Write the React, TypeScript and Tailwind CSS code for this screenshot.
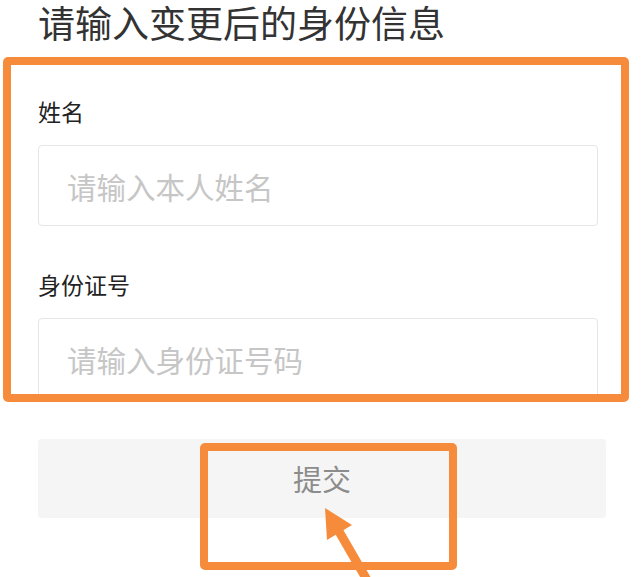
import { useState } from 'react'

const cjk = "font-['Noto_Sans_CJK_SC','Noto_Sans',sans-serif]"

function Field({
  label,
  placeholder,
  value,
  onChange,
}: {
  label: string
  placeholder: string
  value: string
  onChange: (v: string) => void
}) {
  return (
    <div className="flex flex-col">
      <label className="text-[23px] leading-[30px] text-[#222]">{label}</label>
      <input
        value={value}
        onChange={(e) => onChange(e.target.value)}
        placeholder={placeholder}
        className="mt-[19px] h-[81px] w-full rounded-[4px] border border-[#e6e6e6] bg-white px-[28px] text-[29.5px] text-[#333] outline-none placeholder:text-[#c6c6c6]"
      />
    </div>
  )
}

export default function App() {
  const [name, setName] = useState('')
  const [idNo, setIdNo] = useState('')

  return (
    <main className={`relative h-[577px] w-[644px] overflow-hidden bg-white ${cjk}`}>
      <div className="flex flex-col px-[38px]">
        <h1 className="pt-[1px] text-[37px] leading-[43px] text-[#333]">请输入变更后的身份信息</h1>
        <div className="mt-[52px] mr-[8px] flex flex-col gap-[43px]">
          <Field label="姓名" placeholder="请输入本人姓名" value={name} onChange={setName} />
          <Field label="身份证号" placeholder="请输入身份证号码" value={idNo} onChange={setIdNo} />
        </div>
        <button className="mt-[40px] mr-[8px] h-[79px] w-full rounded-[4px] bg-[#f5f5f5] text-[29px] text-[#8c8c8c]">
          提交
        </button>
      </div>

      {/* annotation overlays */}
      <div className="pointer-events-none absolute left-[3px] top-[57px] h-[345px] w-[626px] rounded-[5px] border-[8px] border-[#f68b3c]" />
      <div className="pointer-events-none absolute left-[200px] top-[443px] h-[127px] w-[257px] rounded-[5px] border-[8px] border-[#f68b3c]" />
      <svg className="pointer-events-none absolute left-0 top-0" width="644" height="577">
        <line x1="374" y1="592" x2="337" y2="528" stroke="#f68b3c" strokeWidth="9" />
        <polygon points="325,508 352,525 327,540" fill="#f68b3c" />
      </svg>
    </main>
  )
}
